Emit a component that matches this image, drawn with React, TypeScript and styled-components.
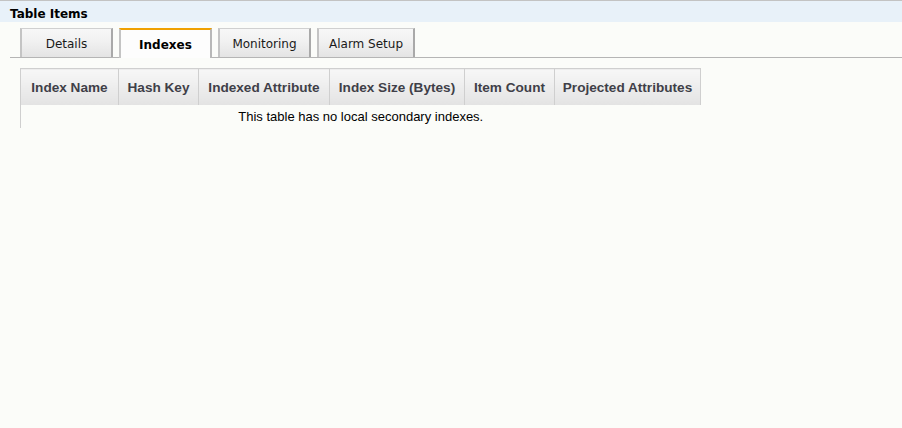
import React, { useState } from "react";
import styled, { createGlobalStyle } from "styled-components";

const GlobalStyle = createGlobalStyle`
  html, body {
    margin: 0;
    padding: 0;
    background: #fbfcf9;
  }
`;

const Page = styled.div`
  width: 902px;
  min-height: 428px;
  background: #fbfcf9;
`;

const TitleBar = styled.div`
  height: 22px;
  box-sizing: border-box;
  border-top: 1px solid #c3c3c3;
  background: #e8f1f9;
  padding: 6px 0 0 10px;
  font-family: "DejaVu Sans", Verdana, sans-serif;
  font-size: 12px;
  font-weight: bold;
  color: #000;
  line-height: 15px;
`;

const TabBar = styled.div`
  display: flex;
  align-items: flex-end;
  gap: 6px;
  margin: 6px 0 0 10px;
  padding-left: 10px;
  height: 29px;
  border-bottom: 1px solid #b5b5b5;
`;

const TabButton = styled.button<{ $active: boolean }>`
  box-sizing: border-box;
  min-width: 93px;
  height: ${(p) => (p.$active ? "30px" : "29px")};
  margin-bottom: ${(p) => (p.$active ? "-1px" : "0")};
  padding: 2px 10px 0;
  border-style: solid;
  border-width: 2px 2px 0 2px;
  border-color: ${(p) =>
    p.$active ? "#f0a000 #b8b8b8 transparent #c4c4c4" : "#d0d0d0 #a9a9a9 transparent #c4c4c4"};
  border-top-width: ${(p) => (p.$active ? "2px" : "1px")};
  background: ${(p) =>
    p.$active ? "#fdfdfd" : "linear-gradient(#f7f7f7, #f2f2f2 40%, #e4e4e4)"};
  font-family: "DejaVu Sans", Verdana, sans-serif;
  font-size: 12px;
  font-weight: ${(p) => (p.$active ? "bold" : "normal")};
  color: ${(p) => (p.$active ? "#000" : "#1a1a1a")};
  cursor: pointer;
  text-align: center;
`;

const Content = styled.div`
  padding: 10px 0 0 20px;
`;

const Table = styled.table`
  border-collapse: collapse;
  table-layout: fixed;
  width: 681px;
  font-family: "Liberation Sans", Arial, sans-serif;
`;

const HeaderCell = styled.th<{ $width: number }>`
  width: ${(p) => p.$width}px;
  height: 36px;
  padding: 0;
  border: 1px solid #cfcfcf;
  border-bottom: none;
  background: linear-gradient(#f7f7f7, #ececec 55%, #e3e3e3);
  font-size: 13.6px;
  font-weight: bold;
  color: #3f3f48;
  white-space: nowrap;
  text-align: center;
`;

const EmptyCell = styled.td`
  height: 23px;
  padding: 0;
  border-left: 1px solid #cfcfcf;
  font-size: 13px;
  color: #000;
  text-align: center;
  vertical-align: top;
  padding-top: 4px;
  box-sizing: border-box;
`;

const tabs = ["Details", "Indexes", "Monitoring", "Alarm Setup"];
const columns = [
  { label: "Index Name", width: 97 },
  { label: "Hash Key", width: 79 },
  { label: "Indexed Attribute", width: 130 },
  { label: "Index Size (Bytes)", width: 134 },
  { label: "Item Count", width: 89 },
  { label: "Projected Attributes", width: 145 },
];

export default function App() {
  const [activeTab, setActiveTab] = useState("Indexes");

  return (
    <Page>
      <GlobalStyle />
      <TitleBar>Table Items</TitleBar>
      <TabBar>
        {tabs.map((tab) => (
          <TabButton
            key={tab}
            $active={activeTab === tab}
            onClick={() => setActiveTab(tab)}
          >
            {tab}
          </TabButton>
        ))}
      </TabBar>
      <Content>
        <Table>
          <thead>
            <tr>
              {columns.map((c) => (
                <HeaderCell key={c.label} $width={c.width}>
                  {c.label}
                </HeaderCell>
              ))}
            </tr>
          </thead>
          <tbody>
            <tr>
              <EmptyCell colSpan={columns.length}>
                This table has no local secondary indexes.
              </EmptyCell>
            </tr>
          </tbody>
        </Table>
      </Content>
    </Page>
  );
}
